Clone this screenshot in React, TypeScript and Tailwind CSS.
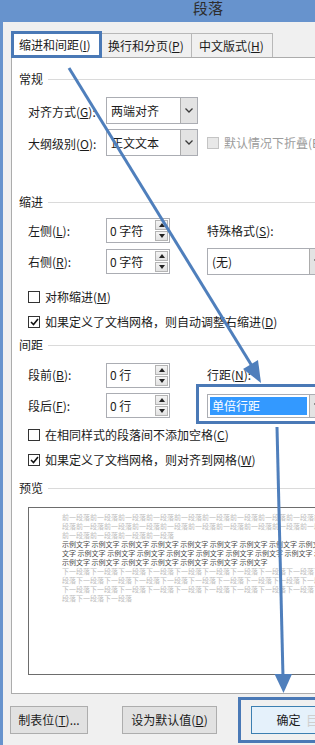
import React from "react";

const PREV_A = "前一段落".repeat(14);
const PREV_B = "段落前一".repeat(14);
const NEXT_A = "下一段落".repeat(14);
const NEXT_B = "段落下一".repeat(14);
const SAMPLE = "示例文字 ".repeat(12);

function Key({ k }: { k: string }) {
    return <span className="underline underline-offset-1">{k}</span>;
}

function Chevron() {
    return (
        <svg width="8" height="5" viewBox="0 0 8 5">
            <polyline points="0.5,0.5 4,4 7.5,0.5" fill="none" stroke="#3a3a3a" strokeWidth="1.3" />
        </svg>
    );
}

function Select({ value, width, active }: { value: string; width: string; active?: boolean }) {
    return (
        <div className={`${width} h-full flex border border-[#abadb3] bg-white`}>
            <div className="flex-1 flex items-center p-[2px]">
                {active ? (
                    <div className="h-full w-full flex items-center pl-[2px] bg-[#3399ff] text-white">{value}</div>
                ) : (
                    <div className="pl-[2px]">{value}</div>
                )}
            </div>
            <div className="w-[17px] flex items-center justify-center bg-[#e3e3e3] border-l border-[#acacac]">
                <Chevron />
            </div>
        </div>
    );
}

function Spin({ value }: { value: string }) {
    return (
        <div className="w-[64px] h-[25px] flex border border-[#abadb3] bg-white">
            <div className="flex-1 flex items-center pl-[3px]">{value}</div>
            <div className="w-[15px] flex flex-col gap-px p-px">
                <div className="flex-1 flex items-center justify-center bg-gradient-to-b from-[#f4f4f4] to-[#e2e2e2] border border-[#b4b4b4]">
                    <svg width="6" height="4" viewBox="0 0 6 4"><polygon points="3,0 6,4 0,4" fill="#222" /></svg>
                </div>
                <div className="flex-1 flex items-center justify-center bg-gradient-to-b from-[#f4f4f4] to-[#e2e2e2] border border-[#b4b4b4]">
                    <svg width="6" height="4" viewBox="0 0 6 4"><polygon points="0,0 6,0 3,4" fill="#222" /></svg>
                </div>
            </div>
        </div>
    );
}

function Check({ checked, disabled }: { checked?: boolean; disabled?: boolean }) {
    return (
        <div
            className={`w-[12px] h-[12px] flex items-center justify-center border ${
                disabled ? "border-[#c4c4c4] bg-[#e8e8e8]" : "border-[#333] bg-white"
            }`}
        >
            {checked && (
                <svg width="9" height="8" viewBox="0 0 9 8">
                    <polyline points="1,4 3.5,6.5 8,1" fill="none" stroke="#111" strokeWidth="1.6" />
                </svg>
            )}
        </div>
    );
}

function Header({ text, className }: { text: string; className: string }) {
    return (
        <div className={`${className} h-[16px] flex items-center pl-[7px]`}>
            <span>{text}</span>
            <div className="flex-1 h-px ml-[5px] bg-[#dadada]" />
        </div>
    );
}

function CheckRow({ className, checked, children }: { className: string; checked?: boolean; children: React.ReactNode }) {
    return (
        <div className={`${className} h-[16px] flex items-center pl-[16px] gap-[5px]`}>
            <Check checked={checked} />
            <span>{children}</span>
        </div>
    );
}

export default function App() {
    return (
        <div className="relative w-[315px] h-[745px] overflow-hidden bg-[#6793cd] text-[12px] leading-[16px] text-[#1b1b1b] font-['Noto_Sans_CJK_SC','Noto_Sans',sans-serif]">
            <div className="w-[416px] flex flex-col">
                {/* Title bar */}
                <div className="h-[22px] text-center text-[15px] leading-[15px] text-[#2d2d2d]">段落</div>

                {/* Dialog body */}
                <div className="ml-[3px] h-[723px] bg-[#f0f0f0] pt-[10px] pl-[8px] pr-[8px]">
                    {/* Tabs */}
                    <div className="flex items-end h-[25px]">
                        <div className="w-[91px] h-[25px] flex items-center pl-[7px] bg-white border-l border-t border-r border-[#acacac]">
                            缩进和间距(<Key k="I" />)
                        </div>
                        <div className="w-[90px] h-[24px] flex items-center pl-[6px] bg-[#f0f0f0] border-t border-r border-[#b8b8b8]">
                            换行和分页(<Key k="P" />)
                        </div>
                        <div className="w-[81px] h-[24px] flex items-center pl-[7px] bg-[#f0f0f0] border-t border-r border-[#b8b8b8]">
                            中文版式(<Key k="H" />)
                        </div>
                    </div>

                    {/* Tab panel */}
                    <div className="h-[637px] flex flex-col bg-white border border-[#acacac]">
                        <Header text="常规" className="mt-[13px]" />

                        <div className="mt-[10px] h-[27px] flex items-center pl-[16px]">
                            <div className="w-[78px] pt-[2px]">对齐方式(<Key k="G" />):</div>
                            <Select value="两端对齐" width="w-[92px]" />
                        </div>
                        <div className="mt-[5px] h-[27px] flex items-center pl-[16px]">
                            <div className="w-[78px] pt-[2px]">大纲级别(<Key k="O" />):</div>
                            <Select value="正文文本" width="w-[92px]" />
                            <div className="ml-[9px] flex items-center gap-[5px] text-[#9c9c9c]">
                                <Check disabled />
                                <span>默认情况下折叠(E)</span>
                            </div>
                        </div>

                        <Header text="缩进" className="mt-[38px]" />

                        <div className="mt-[8px] h-[25px] flex items-center pl-[16px]">
                            <div className="w-[78px]">左侧(<Key k="L" />):</div>
                            <Spin value="0 字符" />
                            <div className="ml-[37px]">特殊格式(<Key k="S" />):</div>
                        </div>
                        <div className="mt-[5px] h-[27px] flex items-center pl-[16px]">
                            <div className="w-[78px]">右侧(<Key k="R" />):</div>
                            <Spin value="0 字符" />
                            <div className="ml-[37px] h-full">
                                <Select value="(无)" width="w-[120px]" />
                            </div>
                        </div>

                        <CheckRow className="mt-[14px]">
                            对称缩进(<Key k="M" />)
                        </CheckRow>
                        <CheckRow className="mt-[9px]" checked>
                            如果定义了文档网格，则自动调整右缩进(<Key k="D" />)
                        </CheckRow>

                        <Header text="间距" className="mt-[7px]" />

                        <div className="mt-[10px] h-[24px] flex items-center pl-[16px]">
                            <div className="w-[78px]">段前(<Key k="B" />):</div>
                            <Spin value="0 行" />
                            <div className="ml-[37px]">行距(<Key k="N" />):</div>
                        </div>
                        <div className="mt-[6px] h-[25px] flex items-center pl-[16px]">
                            <div className="w-[78px]">段后(<Key k="F" />):</div>
                            <Spin value="0 行" />
                            <div className="ml-[37px] h-[24px]">
                                <Select value="单倍行距" width="w-[120px]" active />
                            </div>
                        </div>

                        <CheckRow className="mt-[9px]">
                            在相同样式的段落间不添加空格(<Key k="C" />)
                        </CheckRow>
                        <CheckRow className="mt-[9px]" checked>
                            如果定义了文档网格，则对齐到网格(<Key k="W" />)
                        </CheckRow>

                        <Header text="预览" className="mt-[12px]" />

                        {/* Preview */}
                        <div className="mt-[11px] ml-[16px] h-[168px] border border-[#6d6d6d] bg-white pt-[5px] pl-[33px] overflow-hidden text-[7px] leading-[9px] whitespace-nowrap">
                            <div className="text-[#bdbdbd]">{PREV_A}</div>
                            <div className="text-[#bdbdbd]">{PREV_B}</div>
                            <div className="text-[#bdbdbd]">前一段落前一段落前一段落前一段落</div>
                            <div className="text-[#4a4a4a]">{SAMPLE}</div>
                            <div className="text-[#4a4a4a]">文字 {SAMPLE}</div>
                            <div className="text-[#4a4a4a]">示例文字 示例文字 示例文字 示例文字 示例文字 示例文字 示例文字</div>
                            <div className="text-[#bdbdbd]">{NEXT_A}</div>
                            <div className="text-[#bdbdbd]">{NEXT_B}</div>
                            <div className="text-[#bdbdbd]">{NEXT_A}</div>
                            <div className="text-[#bdbdbd]">段落下一段落下一段落</div>
                        </div>
                    </div>

                    {/* Buttons */}
                    <div className="mt-[12px] flex">
                        <div className="ml-[-1px] w-[78px] h-[28px] flex items-center justify-center bg-[#e1e1e1] border border-[#adadad]">
                            制表位(<Key k="T" />)...
                        </div>
                        <div className="ml-[34px] w-[95px] h-[28px] flex items-center justify-center bg-[#e1e1e1] border border-[#adadad]">
                            设为默认值(<Key k="D" />)
                        </div>
                        <div className="ml-[34px] w-[75px] h-[28px] flex items-center justify-center bg-[#e5f1fb] border border-[#3c7fb1]">
                            确定
                        </div>
                    </div>
                </div>
            </div>

            {/* Annotation highlight boxes */}
            <div className="absolute left-[11px] top-[31px] w-[91px] h-[27px] border-[3px] border-[#4a79b6]" />
            <div className="absolute left-[196px] top-[384px] w-[140px] h-[40px] border-[3px] border-[#4a79b6]" />
            <div className="absolute left-[238px] top-[697px] w-[100px] h-[46px] border-[3px] border-[#4a79b6]" />
            <div className="absolute left-[306px] top-[712px] text-[13px] text-[#cfcfcf]">目</div>

            {/* Annotation arrows */}
            <svg className="absolute left-0 top-0 pointer-events-none" width="315" height="745" viewBox="0 0 315 745">
                <line x1="69" y1="68" x2="252" y2="366" stroke="#4f7fbc" strokeWidth="3" />
                <polygon points="261,383 258,360 243,369" fill="#4f7fbc" />
                <line x1="277" y1="427" x2="283" y2="677" stroke="#4f7fbc" strokeWidth="3" />
                <polygon points="283.5,693 274.5,674 292,674" fill="#4f7fbc" />
            </svg>
        </div>
    );
}
